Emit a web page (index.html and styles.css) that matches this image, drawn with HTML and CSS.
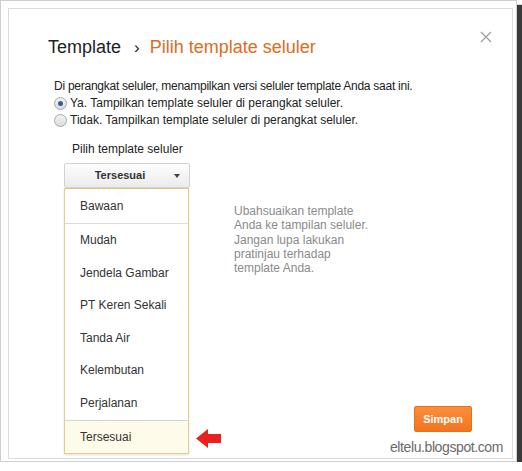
FILE: index.html
```html
<!DOCTYPE html>
<html lang="id">
<head>
<meta charset="UTF-8">
<title>Pilih template seluler</title>
<link rel="stylesheet" href="styles.css">
</head>
<body>

<div class="shot">
  <div class="dialog">
    <svg class="close" width="12" height="12" viewBox="0 0 12 12">
      <path d="M1 1 L11 11 M11 1 L1 11" stroke="#9a9a9a" stroke-width="1.1" fill="none"/>
    </svg>

    <h1>Template <span class="sep">›</span> <span class="sub">Pilih template seluler</span></h1>

    <div class="content">
      <p class="intro">Di perangkat seluler, menampilkan versi seluler template Anda saat ini.</p>
      <label class="opt"><span class="radio on"></span>Ya. Tampilkan template seluler di perangkat seluler.</label>
      <label class="opt"><span class="radio"></span>Tidak. Tampilkan template seluler di perangkat seluler.</label>

      <div class="pick-label">Pilih template seluler</div>

      <div class="row">
        <div class="select">
          <div class="select-btn">Tersesuai<span class="caret"></span></div>
          <ul class="menu">
            <li class="first">Bawaan</li>
            <li>Mudah</li>
            <li>Jendela Gambar</li>
            <li>PT Keren Sekali</li>
            <li>Tanda Air</li>
            <li>Kelembutan</li>
            <li>Perjalanan</li>
            <li class="custom">Tersesuai</li>
          </ul>
        </div>
        <div class="help">
          Ubahsuaikan template<br>
          Anda ke tampilan seluler.<br>
          Jangan lupa lakukan<br>
          pratinjau terhadap<br>
          template Anda.
        </div>
        <div class="actions">
          <button class="save">Simpan</button>
        </div>
      </div>
    </div>

    <svg class="arrow" width="25" height="19" viewBox="0 0 25 19">
      <path d="M0 9.5 L12 0 L12 5 L25 5 L25 14 L12 14 L12 19 Z" fill="#e8211d"/>
    </svg>
    <div class="mark">eltelu.blogspot.com</div>
  </div>
</div>

</body>
</html>
```

FILE: styles.css
```css
body {
  margin: 0;
  background: #fff;
  font-family: "Liberation Sans", Arial, sans-serif;
  color: #222;
}
.shot {
  width: 517px;
  height: 462px;
  box-sizing: border-box;
  border: 1px solid #cfcfcf;
  padding: 7px 3px 2px 7px;
  background: #fff;
  box-shadow: 5px 5px 1px #3a3a3a;
}
.dialog {
  position: relative;
  height: 100%;
  box-sizing: border-box;
  border: 1px solid #dcdcdc;
  padding: 26px 0 0 39px;
}
.close {
  position: absolute;
  top: 22px;
  right: 20px;
}
h1 {
  margin: 0;
  font-size: 18px;
  line-height: 24px;
  font-weight: normal;
  color: #222;
}
.sep {
  margin: 0 5px 0 8px;
  font-size: 17px;
}
.sub {
  color: #dc6c20;
}
.content {
  margin: 18px 0 0 6px;
  font-size: 12px;
  line-height: 17px;
}
.intro {
  margin: 0;
  letter-spacing: -0.25px;
}
.opt {
  display: flex;
  align-items: center;
}
.radio {
  width: 11px;
  height: 11px;
  border-radius: 50%;
  border: 1px solid #a9a9a9;
  background: linear-gradient(#f2f2f2, #dcdcdc);
  margin-right: 3px;
  position: relative;
}
.radio.on::after {
  content: "";
  position: absolute;
  left: 3px;
  top: 3px;
  width: 5px;
  height: 5px;
  border-radius: 50%;
  background: #2d5f9e;
}
.pick-label {
  margin: 12px 0 0 18px;
}
.row {
  display: flex;
  margin-top: 5px;
  margin-left: 10px;
}
.select {
  width: 126px;
}
.select-btn {
  height: 23px;
  line-height: 23px;
  border: 1px solid #d2d2d2;
  border-radius: 2px;
  background: linear-gradient(#fdfdfd, #ebebeb);
  font-size: 11px;
  font-weight: bold;
  color: #333;
  text-align: center;
  padding-right: 14px;
  position: relative;
}
.caret {
  position: absolute;
  right: 9px;
  top: 10px;
  border-left: 3.5px solid transparent;
  border-right: 3.5px solid transparent;
  border-top: 4px solid #444;
}
.menu {
  list-style: none;
  margin: 0;
  padding: 0;
  width: 123px;
  border: 1px solid #e6cd8c;
  border-top-color: #e8c47a;
  box-shadow: 0 1px 2px rgba(0, 0, 0, 0.12);
}
.menu li {
  height: 32.6px;
  line-height: 32.6px;
  padding-left: 15px;
  color: #333;
}
.menu li.first {
  height: 34px;
  line-height: 34px;
  border-bottom: 1px solid #dcdcdc;
}
.menu li.custom {
  border-top: 1px solid #d6d6d6;
  background: #fffbea;
  height: 32px;
  line-height: 32px;
}
.help {
  margin: 41px 0 0 44px;
  font-size: 12px;
  line-height: 14.3px;
  color: #8a8a8a;
  white-space: nowrap;
}
.actions {
  flex: 1;
  display: flex;
  justify-content: flex-end;
  align-items: flex-end;
  padding: 0 40px 22px 0;
}
.save {
  width: 58px;
  height: 26px;
  border: 1px solid #e5701c;
  border-radius: 2px;
  background: linear-gradient(#fb8e3c, #f2741f);
  color: #fff;
  font-family: "Liberation Sans", Arial, sans-serif;
  font-size: 11px;
  font-weight: bold;
  padding: 0;
}
.arrow {
  position: absolute;
  left: 187px;
  top: 420px;
}
.mark {
  position: absolute;
  right: 9px;
  top: 430px;
  font-size: 14px;
  letter-spacing: -0.4px;
  color: #6a6a6a;
}
```
